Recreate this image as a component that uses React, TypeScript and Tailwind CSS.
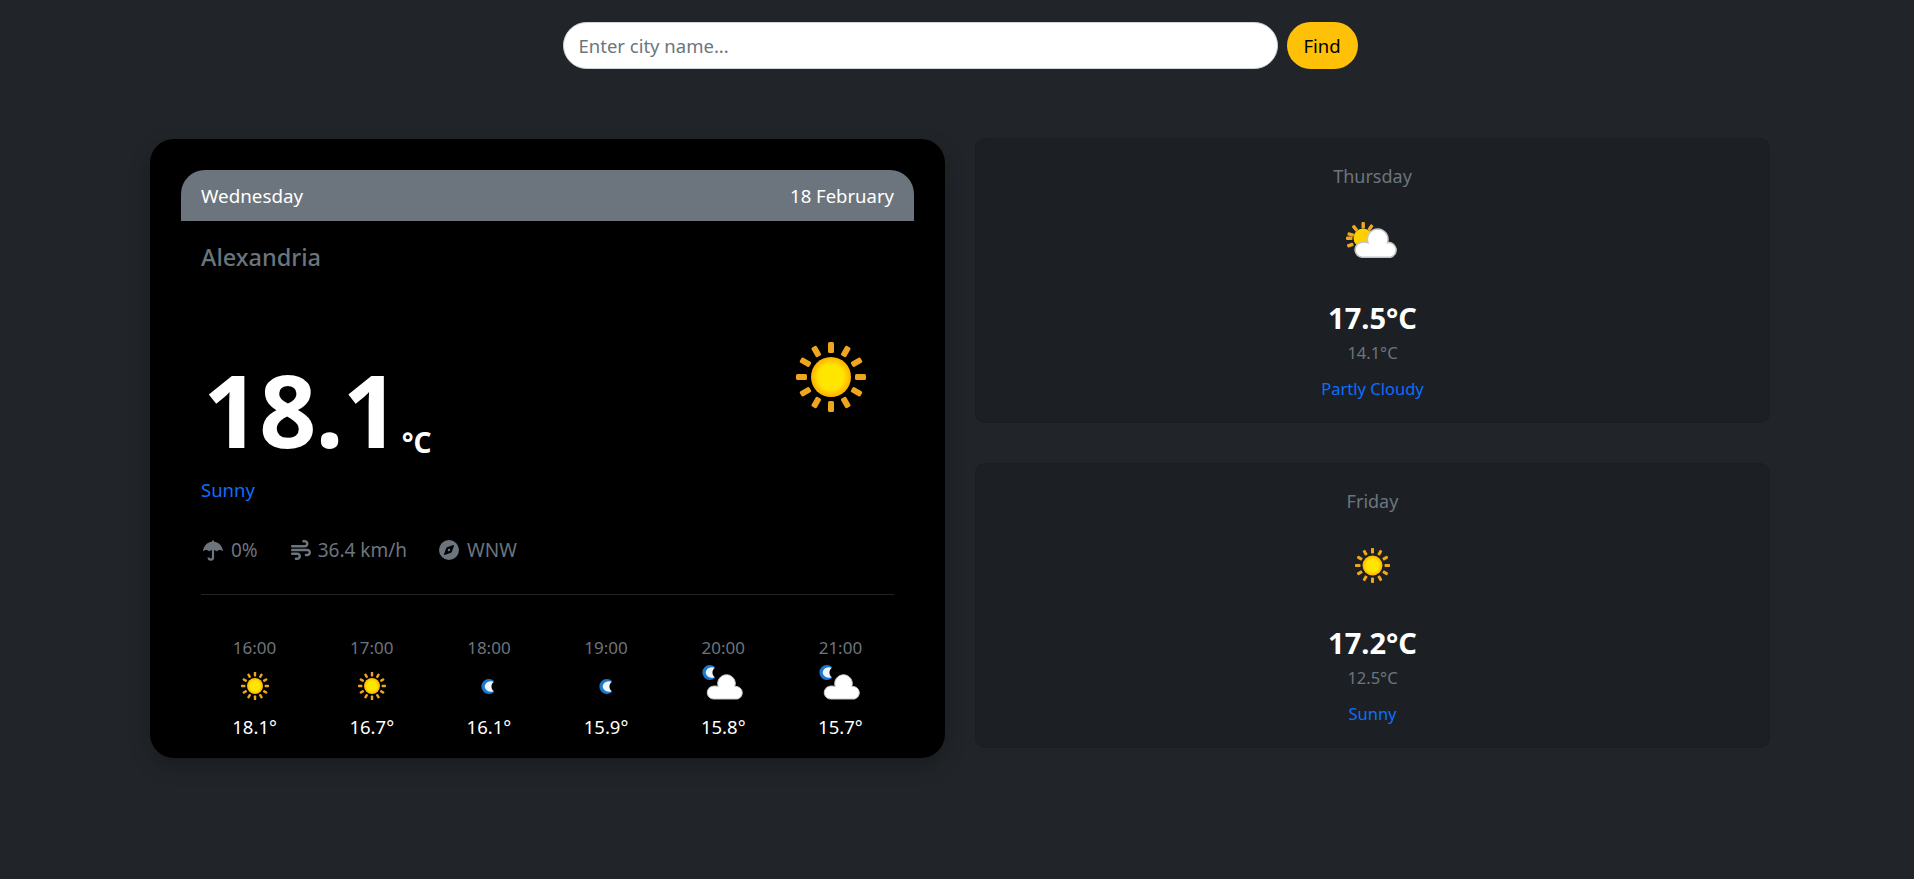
import { FaCompass, FaWind } from "react-icons/fa6";

const rays = [0, 30, 60, 90, 120, 150, 180, 210, 240, 270, 300, 330];

const cloudPath =
  "M11.5 34A6.4 6.4 0 0 1 10.5 21.3C12.5 20.8 14.5 21 16.2 21.5A8.8 8.8 0 1 1 32.8 21.5A6.4 6.4 0 0 1 35.5 34Z";

function Sun({ size }: { size: number }) {
  return (
    <svg width={size} height={size} viewBox="0 0 70 70">
      <defs>
        <radialGradient id="sunCore">
          <stop offset="0.6" stopColor="#ffe600" />
          <stop offset="1" stopColor="#ffb000" />
        </radialGradient>
      </defs>
      {rays.map((r) => (
        <rect key={r} x="32" y="0" width="6" height="11" rx="1.5" fill="#eea61f" transform={`rotate(${r} 35 35)`} />
      ))}
      <circle cx="35" cy="35" r="20" fill="url(#sunCore)" />
    </svg>
  );
}

function MoonShape() {
  return (
    <>
      <path d="M13 2A7.5 7.5 0 1 0 13 13A5.6 5.6 0 0 1 13 2Z" fill="#1a78cf" />
      <path d="M13 2.8A6.5 5.2 0 1 0 13 12.2A5.6 5.6 0 0 1 13 2.8Z" fill="#eef6ff" />
    </>
  );
}

function Moon() {
  return (
    <svg width="15" height="15" viewBox="0 0 15 15">
      <MoonShape />
    </svg>
  );
}

function MoonCloud() {
  return (
    <svg width="42" height="35" viewBox="0 0 42 35" className="mb-[8px]">
      <MoonShape />
      <path d={cloudPath} fill="#ffffff" stroke="#c9c9c9" strokeWidth="1" />
    </svg>
  );
}

function SunCloud() {
  return (
    <svg width="53" height="36" viewBox="0 0 53 36">
      {[0, 35, 70, 105, 285, 320].map((r) => (
        <rect key={r} x="15.5" y="0" width="3.4" height="6.5" rx="1" fill="#f2a81d" transform={`rotate(${r} 17 16)`} />
      ))}
      <rect x="0" y="14.5" width="6.5" height="3.4" rx="1" fill="#f2a81d" />
      <rect x="1" y="21.5" width="6.5" height="3.4" rx="1" fill="#f2a81d" transform="rotate(-20 4 23)" />
      <circle cx="17" cy="16" r="9.5" fill="#ffd000" />
      <g transform="translate(3 -4.5) scale(1.17)">
        <path d={cloudPath} fill="#ffffff" stroke="#c4c4c4" strokeWidth="1.3" />
      </g>
    </svg>
  );
}

function Umbrella() {
  return (
    <svg width="20" height="21" viewBox="0 0 20 21" fill="currentColor" className="mr-[8px]">
      <path d="M9 0.5h2v1.200C16 2.200 19.600 6 20 11.500c-.8-1-1.900-1.500-3.100-1.500-1.300 0-2.400.5-3.100 1.500-.8-1-2.100-1.500-3.800-1.500s-3 .5-3.800 1.500C5.500 10.500 4.400 10 3.100 10 1.900 10 .8 10.500 0 11.500 .4 6 4 2.200 9 1.700Z" />
      <path d="M10 9v8.500a2.200 2.200 0 0 1-4.400 0" fill="none" stroke="currentColor" strokeWidth="2.200" />
    </svg>
  );
}

const hours = [
  { time: "16:00", temp: "18.1°", icon: <Sun size={28} /> },
  { time: "17:00", temp: "16.7°", icon: <Sun size={28} /> },
  { time: "18:00", temp: "16.1°", icon: <Moon /> },
  { time: "19:00", temp: "15.9°", icon: <Moon /> },
  { time: "20:00", temp: "15.8°", icon: <MoonCloud /> },
  { time: "21:00", temp: "15.7°", icon: <MoonCloud /> },
];

const days = [
  { day: "Thursday", high: "17.5°C", low: "14.1°C", text: "Partly Cloudy", icon: <SunCloud /> },
  { day: "Friday", high: "17.2°C", low: "12.5°C", text: "Sunny", icon: <Sun size={35} /> },
];

export default function App() {
  return (
    <div className="min-h-[879px] w-full overflow-hidden bg-[#212529] text-white font-['Noto_Sans',sans-serif]">
      <div className="w-[1920px]">
        {/* Search */}
        <form className="flex justify-center gap-[9px] pt-[22px]">
          <input
            placeholder="Enter city name..."
            className="h-[47px] w-[715px] rounded-[24px] border border-[#ced4da] bg-white px-[15px] text-[18.5px] text-[#212529] outline-none placeholder:text-[#6c757d]"
          />
          <button type="button" className="h-[47px] w-[71px] rounded-[24px] bg-[#ffc107] text-[18.5px] text-black">
            Find
          </button>
        </form>

        <div className="mt-[70px] grid grid-cols-2 gap-[30px] px-[150px]">
          {/* Today */}
          <div className="h-[619px] rounded-[24px] bg-black p-[31px] shadow-[0_8px_20px_rgba(0,0,0,0.25)]">
            <div className="flex h-[51px] items-center justify-between rounded-t-[24px] bg-[#6c757d] px-[20px] text-[18.5px] leading-[26px]">
              <span className="text-[18.8px]">Wednesday</span>
              <span>18 February</span>
            </div>
            <div className="px-[20px]">
              <h2 className="mt-[20px] text-[23.5px] font-medium leading-[32px] text-[#6c757d]">Alexandria</h2>
              <div className="mt-[56px] flex h-[140px] justify-between">
                <div className="flex items-end self-end">
                  <span className="pl-[2px] text-[100px] font-bold leading-[120px] tracking-[-1px]">18.1</span>
                  <span className="mb-[8px] ml-[3px] text-[28px] font-bold leading-[38px]">°C</span>
                </div>
                <div className="mr-[28px] mt-[13px]">
                  <Sun size={70} />
                </div>
              </div>
              <p className="mt-[8px] text-[18.5px] leading-[26px] text-[#0d6efd]">Sunny</p>
              <div className="mt-[34px] flex h-[26px] items-center pl-[2px] text-[19px] text-[#6c757d]">
                <Umbrella />
                <span>0%</span>
                <FaWind className="ml-[33px] mr-[7px] text-[20px]" />
                <span>36.4 km/h</span>
                <FaCompass className="ml-[32px] mr-[8px] text-[20px]" />
                <span>WNW</span>
              </div>
              <div className="mt-[31px] border-t border-[#212529]" />
              <div className="mx-[-5px] mt-[41px] grid grid-cols-6 text-center">
                {hours.map((h) => (
                  <div key={h.time} className="flex flex-col items-center">
                    <span className="text-[17px] leading-[24px] text-[#6c757d]">{h.time}</span>
                    <div className="flex h-[52px] w-full items-center justify-center">{h.icon}</div>
                    <span className="mt-[2px] text-[18.5px] leading-[26px]">{h.temp}</span>
                  </div>
                ))}
              </div>
            </div>
          </div>

          {/* Next days */}
          <div className="mt-[-1px] flex flex-col gap-[40px]">
            {days.map((d) => (
              <div
                key={d.day}
                className="flex h-[285px] flex-col items-center rounded-[10px] border border-[#1a1d21] bg-[#1c2024] pt-[24px]"
              >
                <span className="text-[18px] leading-[26px] text-[#6c757d]">{d.day}</span>
                <div className="mt-[19px] flex h-[64px] items-center justify-center">{d.icon}</div>
                <span className="mt-[27px] text-[29px] font-bold leading-[38px]">{d.high}</span>
                <span className="mt-[3px] text-[16.5px] leading-[26px] text-[#6c757d]">{d.low}</span>
                <span className="mt-[10px] text-[16.5px] leading-[26px] text-[#0d6efd]">{d.text}</span>
              </div>
            ))}
          </div>
        </div>
      </div>
    </div>
  );
}
